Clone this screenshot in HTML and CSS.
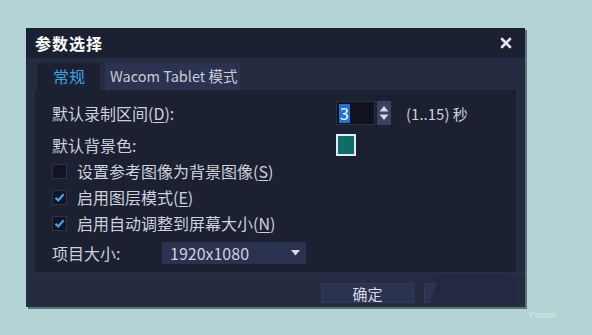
FILE: index.html
```html
<!DOCTYPE html>
<html lang="zh">
<head>
<meta charset="utf-8">
<link rel="stylesheet" href="styles.css">
</head>
<body>
<div class="dialog">
  <div class="titlebar">
    <span class="title">参数选择</span>
    <svg class="close" width="12" height="12" viewBox="0 0 12 12"><path d="M2 2 L10 10 M10 2 L2 10" stroke="#e6e8ef" stroke-width="2.6" stroke-linecap="round"/></svg>
  </div>
  <div class="tabs">
    <div class="tab active">常规</div>
    <div class="tab">Wacom Tablet 模式</div>
  </div>
  <div class="middle">
    <div class="panel">
      <div class="row r1">
        <span class="label wide">默认录制区间(<u>D</u>):</span>
        <div class="spin">
          <div class="spin-input"><span class="sel">3</span></div>
          <div class="spin-btn">
            <svg width="14" height="22" viewBox="0 0 14 22"><path d="M2.5 9.5 L7 4 L11.5 9.5 Z M2.5 12.5 L7 18 L11.5 12.5 Z" fill="#d3d7e0"/></svg>
          </div>
        </div>
        <span class="range">(1..15) 秒</span>
      </div>
      <div class="row r2">
        <span class="label wide">默认背景色:</span>
        <div class="swatch"></div>
      </div>
      <div class="row check">
        <span class="box"></span>
        <span class="label">设置参考图像为背景图像(<u>S</u>)</span>
      </div>
      <div class="row check">
        <span class="box"><svg width="13" height="13" viewBox="0 0 13 13"><path d="M2.5 6.8 L5.2 9.4 L10.6 3.2" fill="none" stroke="#3fa6f2" stroke-width="2.2"/></svg></span>
        <span class="label">启用图层模式(<u>E</u>)</span>
      </div>
      <div class="row check">
        <span class="box"><svg width="13" height="13" viewBox="0 0 13 13"><path d="M2.5 6.8 L5.2 9.4 L10.6 3.2" fill="none" stroke="#3fa6f2" stroke-width="2.2"/></svg></span>
        <span class="label">启用自动调整到屏幕大小(<u>N</u>)</span>
      </div>
      <div class="row r6">
        <span class="label size">项目大小:</span>
        <div class="select">
          <span>1920x1080</span>
          <svg width="9" height="6" viewBox="0 0 9 6"><path d="M0 0 L9 0 L4.5 5.5 Z" fill="#d6dae3"/></svg>
        </div>
      </div>
    </div>
  </div>
  <div class="footer">
    <div class="btn">确定</div>
    <div class="btn second"></div>
    <div class="overlay"></div>
  </div>
</div>
<div class="mark">Yxcom</div>
</body>
</html>
```
FILE: styles.css
```css
* { box-sizing: border-box; }
html, body { margin: 0; padding: 0; }
body {
  width: 592px;
  height: 335px;
  background: #b4d3d5;
  font-family: "Noto Sans CJK SC", "Noto Sans", sans-serif;
  color: #cdd1db;
  overflow: hidden;
  position: relative;
}
.dialog {
  margin: 28px 0 0 26px;
  width: 499px;
  height: 279px;
  background: #252b40;
  display: flex;
  flex-direction: column;
  box-shadow: 2px 2px 0 #5e7376;
  position: relative;
}
.titlebar {
  height: 30px;
  background: #1b2032;
  display: flex;
  align-items: center;
  justify-content: space-between;
  padding: 0 13px 0 9px;
}
.title {
  color: #ffffff;
  font-weight: bold;
  font-size: 16px;
  letter-spacing: 1px;
}
.tabs {
  height: 32px;
  display: flex;
  align-items: flex-end;
  padding-left: 11px;
  gap: 5px;
}
.tab {
  height: 27px;
  display: flex;
  align-items: center;
  font-size: 14.5px;
  background: #2b3350;
  color: #c8ccd6;
  padding: 0 3px 2px 5px;
}
.tab.active {
  background: #1c2132;
  color: #3aa0e0;
  width: 63px;
  padding-left: 16px;
  font-size: 16px;
}
.middle {
  display: flex;
  padding-left: 9px;
}
.panel {
  width: 481px;
  height: 182px;
  background: #1c2132;
  padding: 11px 0 0 17px;
  display: flex;
  flex-direction: column;
}
.row {
  display: flex;
  align-items: center;
  font-size: 16px;
}
.r1 { height: 24px; }
.r2 { height: 22px; margin-top: 9px; }
.check { height: 26px; }
.r2 + .check { margin-top: 2px; }
.r6 { height: 22px; margin-top: 6px; }
.label.wide { width: 284px; }
.label.size { width: 110px; }
u { text-decoration: underline; text-underline-offset: 2px; }
.spin { display: flex; height: 24px; gap: 2px; }
.spin-input {
  width: 39px;
  background: #10131e;
  border: 1px solid #2a3048;
  padding: 2px 0 0 2px;
}
.sel {
  display: block;
  width: 11px;
  height: 19px;
  background: #1e74d6;
  color: #ffffff;
  font-size: 16px;
  line-height: 19px;
  text-align: center;
}
.spin-btn {
  width: 14px;
  background: #3a4262;
  display: flex;
  align-items: center;
  justify-content: center;
}
.range { margin-left: 15px; font-size: 15px; }
.swatch {
  width: 20px;
  height: 22px;
  background: #0d6e67;
  border: 2px solid #e6e9ef;
}
.box {
  width: 15px;
  height: 15px;
  background: #111421;
  border: 1px solid #2c3350;
  margin-right: 10px;
  display: flex;
  align-items: center;
  justify-content: center;
}
.select {
  width: 144px;
  height: 22px;
  background: #2a3250;
  display: flex;
  align-items: center;
  justify-content: space-between;
  padding: 0 6px 0 8px;
  font-size: 16px;
  color: #cdd1db;
}
.footer {
  height: 35px;
  display: flex;
  align-items: flex-start;
  padding: 10px 0 0 295px;
  gap: 10px;
  border-top: 1px solid #2a3047;
  position: relative;
}
.btn {
  width: 93px;
  height: 20px;
  background: #2b3350;
  border: 1px solid #323a58;
  font-size: 15px;
  display: flex;
  align-items: center;
  justify-content: center;
  color: #d6dae3;
}
.btn.second { width: 86px; }
.overlay {
  position: absolute;
  left: 404px;
  top: 0;
  width: 86px;
  height: 31px;
  background: #232940;
  clip-path: polygon(10px 0, 78px 0, 86px 10px, 86px 31px, 0 31px);
}
.mark {
  position: absolute;
  left: 528px;
  top: 310px;
  font-size: 9px;
  color: #dfeaeb;
  font-family: "Liberation Sans", sans-serif;
}
```
